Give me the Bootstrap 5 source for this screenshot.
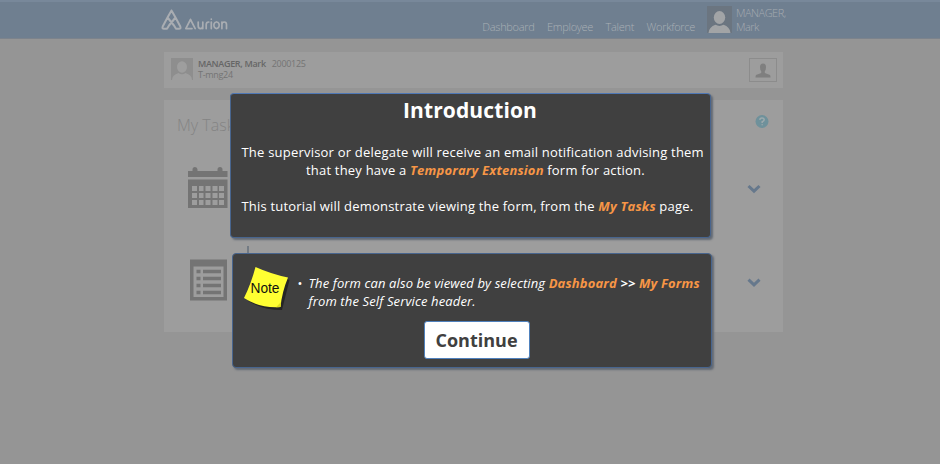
<!DOCTYPE html>
<html lang="en">
<head>
<meta charset="utf-8">
<meta name="viewport" content="width=device-width, initial-scale=1">
<title>Aurion - My Tasks tutorial</title>
<link href="https://cdn.jsdelivr.net/npm/bootstrap@5.3.0/dist/css/bootstrap.min.css" rel="stylesheet">
<style>
body{font-family:"Open Sans",sans-serif;background:#959595;height:464px;overflow:hidden;color:#747474}
.topbar{height:39px;background:#6f7f90;border-top:2px solid #78889a;border-bottom:1px solid #7c838c;color:#a6abb1}
.page-col{width:619px;margin-left:164px}
.topbar .page-col{width:624px}
.brand{width:68px;height:24px;margin:6px 0 0 -4px}
.menu{font-size:11px;font-weight:300;line-height:16px;padding-top:17px;gap:12.5px;letter-spacing:-.3px;margin-right:12px}
.menu a{color:#a9afb5;text-decoration:none}
.user-name{font-size:11px;font-weight:300;line-height:14px;padding-top:4px;width:52px;letter-spacing:-.5px}
.sheet{background:#9d9d9d}
.person{height:36px;margin-top:13px;font-size:9px;line-height:11px;padding:6px 6px 0 7px}
.person b{font-weight:600;color:#666;letter-spacing:-.32px}
.person-text{margin-left:5px;letter-spacing:-.3px}
.person-text span{margin-left:6px}
.person-btn{width:28px;height:24px;border:1px solid #8c8c8c;background:#9d9d9d}
.tasks{height:232px;margin-top:12px;padding:14px 14px 0 13px}
.tasks h1{font-size:16px;font-weight:300;line-height:22px;color:#848484}
.task-row{height:93px;padding:0 8px 0 11px}
.tip{position:absolute;background:#404040;color:#fff;border:1.5px solid #48658e;border-radius:4px;box-shadow:2px 2px 2px #626a75}
.tip-intro{left:229.5px;top:92.5px;width:481px;height:145px;border-top-color:#4f78b6}
.tip-note{left:231.5px;top:253px;width:480px;height:115px}
.tip h2{font-size:21px;font-weight:700;line-height:28px;margin:2px 0 0;text-align:center;letter-spacing:.12px}
.tip p{font-size:13px;line-height:18.3px;white-space:nowrap;margin:0}
.tip strong{color:#f79646;font-weight:700;font-style:italic}
.intro-copy{margin:19px 0 0 11px}
.intro-copy .l1{letter-spacing:.21px}
.intro-copy .l2{letter-spacing:.2px;margin-left:64.5px}
.intro-copy .l3{letter-spacing:.2px;margin-top:18.3px}
.note-row{padding:13px 0 0 10px;height:67px}
.note-copy{margin:7px 0 0 5px}
.bullet{width:11px}
.note-copy .n1{letter-spacing:.11px}
.note-copy .n2{letter-spacing:.13px}
.note-copy strong{letter-spacing:.16px}
.go{width:106px;height:38px;margin-left:191px;border:1px solid #4f81bd;border-radius:3px;background:#fff;color:#404040;font-size:18px;font-weight:700;line-height:36px;padding:0}
.go:hover{background:#fff;color:#404040}
</style>
<script src="https://cdn.jsdelivr.net/npm/bootstrap@5.3.0/dist/js/bootstrap.bundle.min.js"></script>
</head>
<body class="position-relative">
<header class="topbar">
  <div class="page-col d-flex">
    <svg class="brand" viewBox="0 0 68 24" fill="none" stroke="#a9adb2" stroke-linejoin="round" stroke-linecap="round">
      <path stroke-width="2" d="M11.5 2.5 7.500 9.500 14 17.500 16 20.800H19Q21.200 20.800 20.300 18.500L15.500 9.500 11.500 2.500M15.500 9.500 9 17.500 7 20.800H4Q1.800 20.800 2.700 18.500L7.500 9.500"/>
      <path stroke-width="1.7" d="M30.500 11.500 25.800 20.600H32M30.500 11.500 35.200 20.600M38.2 14V18Q38.2 20.6 40.5 20.6T42.800 18V14M42.800 18V20.6M46.200 20.6V16.500Q46.200 14 48.800 14M51.300 14V20.6M51.300 11V11.200M56.500 14A2.700 3.300 0 1 0 56.600 14M61.900 20.6V14M61.900 16.500Q61.900 14 64.200 14T66.500 16.500V20.6"/>
    </svg>
    <nav class="menu d-flex ms-auto">
      <a href="#">Dashboard</a><a href="#">Employee</a><a href="#">Talent</a><a href="#">Workforce</a>
    </nav>
    <svg class="mt-1" width="25" height="27" viewBox="0 0 25 27"><rect width="25" height="27" fill="#6b7580"/><g fill="#a2a4a6"><ellipse cx="12.5" cy="11.500" rx="5.700" ry="6.500"/><path d="M1.5 27Q2 21 8.5 18.8Q12.5 21 16.5 18.8Q23 21 23.5 27Z"/></g></svg>
    <div class="user-name ms-1">MANAGER, Mark</div>
  </div>
</header>
<main class="page-col">
  <section class="sheet person d-flex">
    <svg width="22" height="22" viewBox="0 0 22 22"><rect width="22" height="22" fill="#8e8e8e"/><g fill="#9e9e9e"><ellipse cx="11" cy="9" rx="5" ry="5.8"/><path d="M1 22Q1 17 7.5 15Q11 17.5 14.5 15Q21 17 21 22Z"/></g></svg>
    <div class="person-text"><b>MANAGER, Mark</b><span>2000125</span><div>T-mng24</div></div>
    <button class="person-btn ms-auto p-0 d-flex justify-content-center align-items-center" aria-label="Profile"><svg width="16" height="15" viewBox="0 0 16 15" fill="#7f7f7f"><path d="M5 4Q5 0.5 8 .5T11 4Q11 7 9.8 8V10L15 12Q15.5 12.5 15.5 14.5H.5Q.5 12.5 1 12L6.2 10V8Q5 7 5 4Z"/></svg></button>
  </section>
  <section class="sheet tasks">
    <div class="d-flex justify-content-between"><h1 class="mb-0">My Tasks</h1><svg width="14" height="15" viewBox="0 0 14 15"><circle cx="7" cy="7.500" r="6.500" fill="#6f919b"/><path d="M4.8 5.9Q4.9 4 7 4T9.2 5.8Q9.2 7 7.2 7.7V8.9M7.2 10.3V11.3" fill="none" stroke="#9eaaad" stroke-width="1.5"/></svg></div>
    <div class="task-row d-flex justify-content-between align-items-center pt-2">
      <svg width="40" height="42" viewBox="0 -1 40 42" fill="#747474"><path d="M0 4H4.5V2.5A2.5 2.5 0 0 1 9.5 2.5V4H29.5V2.5A2.5 2.5 0 0 1 34.5 2.5V4H39.500V10H0ZM0 12.500H39.500V41H0Z"/><path fill="#9d9d9d" d="M4 19h5v5H4zm7 0h4.500v5H11zm6.500 0h5v5h-5zm7 0h5v5h-5zm6.500 0h5v5h-5zM4 26h5v5H4zm7 0h4.500v5H11zm6.500 0h5v5h-5zm7 0h5v5h-5zm6.500 0h5v5h-5zM4 33h5v5H4zm7 0h4.500v5H11zm6.500 0h5v5h-5zm7 0h5v5h-5zm6.500 0h5v5h-5z"/></svg>
      <svg class="mt-1" width="14" height="10" viewBox="0 0 14 10" fill="none" stroke="#66788c" stroke-width="3"><path d="M1.5 2 7 7.2 12.5 2"/></svg>
    </div>
    <div class="task-row d-flex justify-content-between align-items-center pt-2">
      <svg width="39" height="42" viewBox="-2 -.5 39 42"><path d="M0 0H37V41H0ZM3.5 7V37.5H33.5V7Z" fill="#747474" fill-rule="evenodd"/><path d="M6.5 12H10.5M13 12H31M6.5 19H10.5M13 19H31M6.5 26H10.5M13 26H31M6.5 33H10.5M13 33H31" stroke="#747474" stroke-width="3.4"/></svg>
      <svg class="mt-1" width="14" height="10" viewBox="0 -.7 14 10" fill="none" stroke="#66788c" stroke-width="3"><path d="M1.5 2 7 7.2 12.5 2"/></svg>
    </div>
  </section>
</main>
<svg class="position-absolute" style="left:247px;top:246px" width="2" height="8"><path d="M1 0V8" stroke="#66717d" stroke-width="1.5"/></svg>
<section class="tip tip-intro" role="dialog" aria-label="Introduction">
  <h2>Introduction</h2>
  <div class="intro-copy">
    <p class="l1">The supervisor or delegate will receive an email notification advising them</p>
    <p class="l2">that they have a <strong>Temporary Extension</strong> form for action.</p>
    <p class="l3">This tutorial will demonstrate viewing the form, from the <strong>My Tasks</strong> page.</p>
  </div>
</section>
<section class="tip tip-note" role="dialog" aria-label="Note">
  <div class="d-flex note-row">
    <svg width="50" height="46" viewBox="0 0 50 46"><path d="M14 3 46.500 13 39 43Q20 43 5 34Z" fill="#252525"/><path d="M12.500 0Q28 7 45 10.500Q39 25 37.500 40Q17 41.500 1 31Q8 17 12.500 0Z" fill="#ffff32"/><path d="M37.500 40 33 40.200 38 35Z" fill="#dedd20"/><text x="7.500" y="25.500" font-family="Liberation Sans, sans-serif" font-size="14" fill="#111" textLength="29" lengthAdjust="spacingAndGlyphs">Note</text></svg>
    <div class="note-copy d-flex fst-italic"><p class="bullet fst-normal">•</p><div><p class="n1">The form can also be viewed by selecting <strong>Dashboard</strong> <b>&gt;&gt;</b> <strong>My Forms</strong></p><p class="n2">from the Self Service header.</p></div></div>
  </div>
  <button class="btn go">Continue</button>
</section>
</body>
</html>
